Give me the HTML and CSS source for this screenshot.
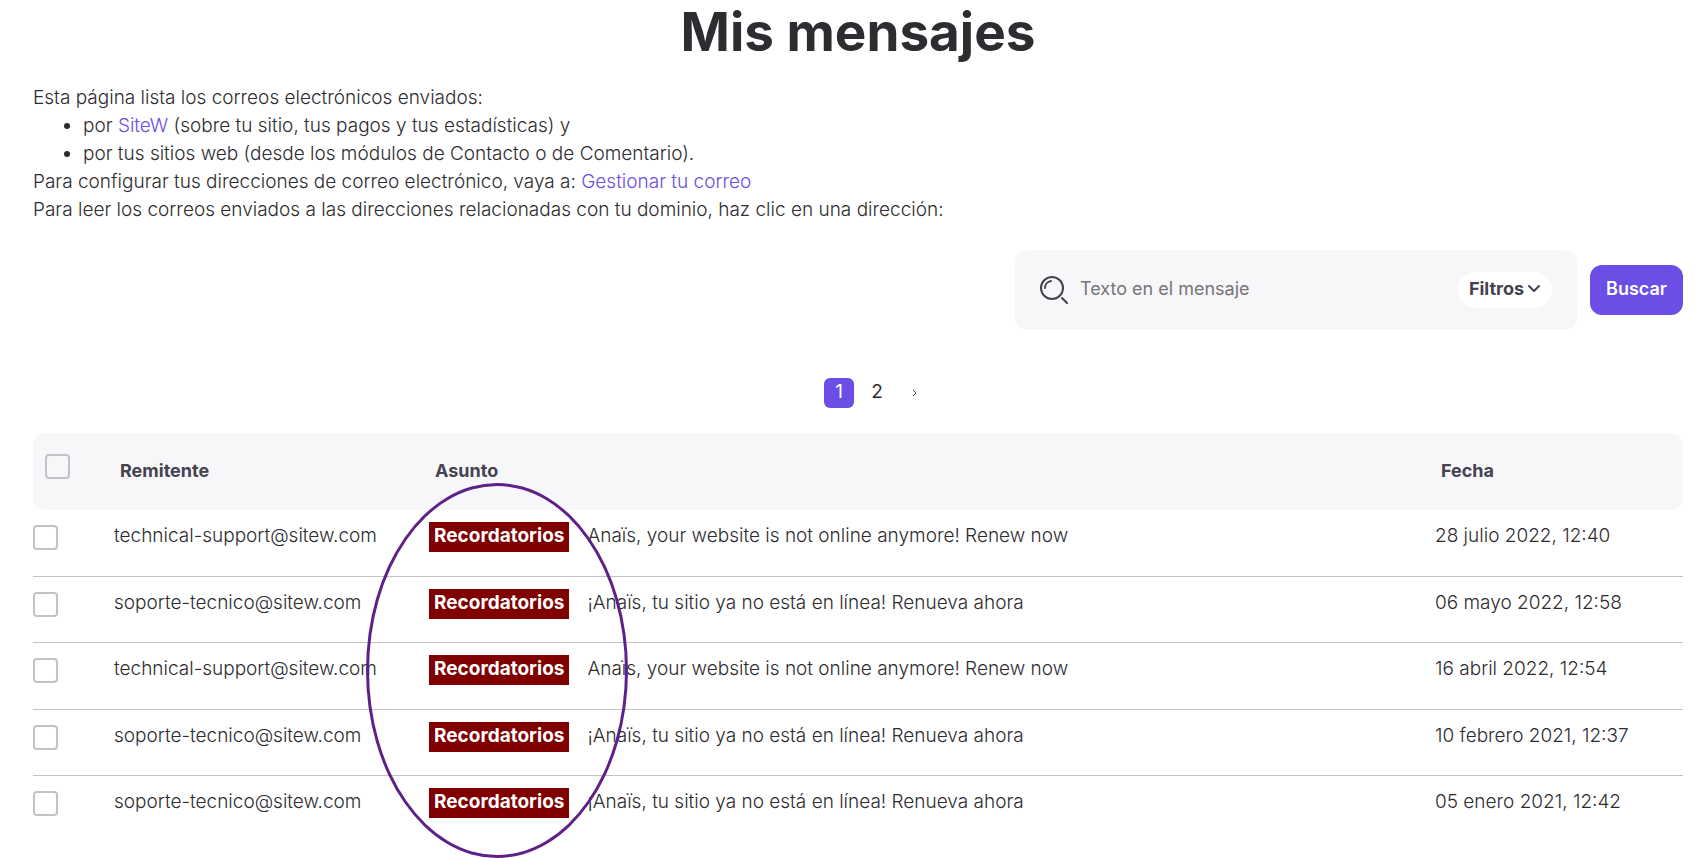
FILE: index.html
```
<!DOCTYPE html>
<html lang="es">

<head>
    <meta charset="UTF-8">
    <title>Mis mensajes</title>
    <link rel="stylesheet" href="styles.css">
</head>

<body>
    <h1>Mis mensajes</h1>

    <div class="intro">
        <p>Esta página lista los correos electrónicos enviados:</p>
        <ul>
            <li>por <a href="#">SiteW</a> (sobre tu sitio, tus pagos y tus estadísticas) y</li>
            <li>por tus sitios web (desde los módulos de Contacto o de Comentario).</li>
        </ul>
        <p>Para configurar tus direcciones de correo electrónico, vaya a: <a href="#">Gestionar tu correo</a></p>
        <p>Para leer los correos enviados a las direcciones relacionadas con tu dominio, haz clic en una dirección:</p>
    </div>

    <form class="search">
        <div class="search-box">
            <svg class="icon-search" viewBox="0 0 28 28" fill="none" stroke="#45424f" stroke-width="2" stroke-linecap="round">
                <circle cx="12" cy="12" r="11"/>
                <path d="M5 12a7 7 0 0 1 6-7M22 22l5 5"/>
            </svg>
            <input type="text" class="search-input" aria-label="Texto en el mensaje" placeholder="Texto en el mensaje">
            <button type="button" class="filters">Filtros
                <svg class="icon-down" viewBox="0 0 14 10" fill="none" stroke="#45424f" stroke-width="2" stroke-linecap="round" stroke-linejoin="round">
                    <path d="M2 2l5 5 5-5"/>
                </svg>
            </button>
        </div>
        <button type="button" class="submit">Buscar</button>
    </form>

    <nav class="pager">
        <a href="#" class="current">1</a>
        <a href="#">2</a>
        <a href="#" class="next" aria-label="Siguiente">
            <svg viewBox="0 0 6 8" fill="none" stroke="#45424f"><path d="M1 1l3 3-3 3"/></svg>
        </a>
    </nav>

    <div class="messages">
        <table>
            <thead>
                <tr>
                    <th class="col-check"><input type="checkbox" aria-label="Seleccionar todo"></th>
                    <th class="col-sender">Remitente</th>
                    <th class="col-subject">Asunto</th>
                    <th class="col-date">Fecha</th>
                </tr>
            </thead>
            <tbody>
                <tr>
                    <td><input type="checkbox" aria-label="Seleccionar mensaje 1"></td>
                    <td>technical-support@sitew.com</td>
                    <td><span class="tag">Recordatorios</span>Anaïs, your website is not online anymore! Renew now</td>
                    <td>28 julio 2022, 12:40</td>
                </tr>
                <tr>
                    <td><input type="checkbox" aria-label="Seleccionar mensaje 2"></td>
                    <td>soporte-tecnico@sitew.com</td>
                    <td><span class="tag">Recordatorios</span>¡Anaïs, tu sitio ya no está en línea! Renueva ahora</td>
                    <td>06 mayo 2022, 12:58</td>
                </tr>
                <tr>
                    <td><input type="checkbox" aria-label="Seleccionar mensaje 3"></td>
                    <td>technical-support@sitew.com</td>
                    <td><span class="tag">Recordatorios</span>Anaïs, your website is not online anymore! Renew now</td>
                    <td>16 abril 2022, 12:54</td>
                </tr>
                <tr>
                    <td><input type="checkbox" aria-label="Seleccionar mensaje 4"></td>
                    <td>soporte-tecnico@sitew.com</td>
                    <td><span class="tag">Recordatorios</span>¡Anaïs, tu sitio ya no está en línea! Renueva ahora</td>
                    <td>10 febrero 2021, 12:37</td>
                </tr>
                <tr>
                    <td><input type="checkbox" aria-label="Seleccionar mensaje 5"></td>
                    <td>soporte-tecnico@sitew.com</td>
                    <td><span class="tag">Recordatorios</span>¡Anaïs, tu sitio ya no está en línea! Renueva ahora</td>
                    <td>05 enero 2021, 12:42</td>
                </tr>
            </tbody>
        </table>
        <div class="highlight"></div>
    </div>
</body>

</html>
```
FILE: styles.css
```
* {
    box-sizing: border-box;
}

body {
    min-height: 100vh;
    margin: 0;
    padding: 0 24px 0 33px;
    background-color: #fff;
    color: #2d2c30;
    font-family: Inter, "Open Sans", sans-serif;
    font-size: 19px;
    font-weight: 300;
    line-height: 28px;
}

h1 {
    margin: 0 0 20px;
    font-size: 53px;
    font-weight: 700;
    line-height: 64px;
    text-align: center;
}

p {
    margin: 0;
}

ul {
    margin: 0;
    padding-left: 50px;
}

a {
    color: #6c4de6;
    text-decoration: none;
}

button,
input {
    font: inherit;
}

button {
    border: 0;
    cursor: pointer;
}

.search {
    display: flex;
    justify-content: flex-end;
    align-items: center;
    gap: 13px;
    margin-top: 26px;
}

.search-box {
    display: flex;
    align-items: center;
    width: 562px;
    height: 80px;
    padding: 0 25px;
    border-radius: 12px;
    background-color: #f7f7fa;
}

.icon-search {
    width: 28px;
    height: 28px;
}

.search-input {
    flex: 1;
    min-width: 0;
    padding: 0 12px 2px;
    border: 0;
    outline: 0;
    background: none;
    font-size: 18px;
    font-weight: 400;
}

.search-input::placeholder {
    color: #757575;
}

.filters {
    display: flex;
    align-items: center;
    justify-content: center;
    gap: 3px;
    width: 94px;
    height: 36px;
    padding: 0 0 2px;
    border-radius: 18px;
    background-color: #fff;
    color: #45424f;
    font-size: 18px;
    font-weight: 700;
}

.icon-down {
    width: 14px;
    height: 10px;
}

.submit {
    width: 93px;
    height: 50px;
    padding: 0 0 2px;
    border-radius: 12px;
    background-color: #6c4de6;
    color: #fff;
    font-size: 18px;
    font-weight: 600;
}

.pager {
    display: flex;
    justify-content: center;
    gap: 8px;
    margin: 48px 0 25px;
    padding-left: 38px;
}

.pager a {
    width: 30px;
    height: 30px;
    border-radius: 6px;
    color: #2d2c30;
    font-weight: 400;
    text-align: center;
}

.pager .current {
    background-color: #6c4de6;
    color: #fff;
}

.pager .next svg {
    width: 6px;
    height: 8px;
    vertical-align: middle;
}

.messages {
    position: relative;
}

table {
    width: 100%;
    table-layout: fixed;
    border-collapse: separate;
    border-spacing: 0;
}

th {
    height: 77px;
    padding: 0 6px 2px;
    background-color: #f7f7fa;
    color: #45424f;
    font-size: 18px;
    font-weight: 700;
    text-align: left;
}

th:first-child {
    padding: 21px 12px;
    border-radius: 12px 0 0 12px;
    vertical-align: top;
}

th:last-child {
    border-radius: 0 12px 12px 0;
}

td {
    height: 66px;
    padding: 12px 0 0;
    border-bottom: 1px solid #c2c1c8;
    vertical-align: top;
    white-space: nowrap;
}

tr:nth-child(odd) td {
    height: 67px;
}

tr:last-child td {
    border-bottom: 0;
}

td:first-child {
    padding-top: 15px;
}

.col-check {
    width: 81px;
}

.col-sender {
    width: 315px;
}

.col-date {
    width: 248px;
}

input[type="checkbox"] {
    display: block;
    width: 25px;
    height: 25px;
    margin: 0;
    border: 2px solid #c2c1c8;
    border-radius: 4px;
    background-color: transparent;
    appearance: none;
}

input[type="checkbox"]:checked {
    background-color: #6c4de6;
}

.tag {
    display: inline-block;
    margin-right: 18px;
    padding: 0 5px 2px;
    background-color: #800000;
    color: #fff;
    font-size: 19px;
    font-weight: 700;
}

/* ring around the reminder tags */
.highlight {
    position: absolute;
    top: 50px;
    left: 333px;
    width: 262px;
    height: 375px;
    border: 3px solid #5f2089;
    border-radius: 50%;
    pointer-events: none;
}
```
